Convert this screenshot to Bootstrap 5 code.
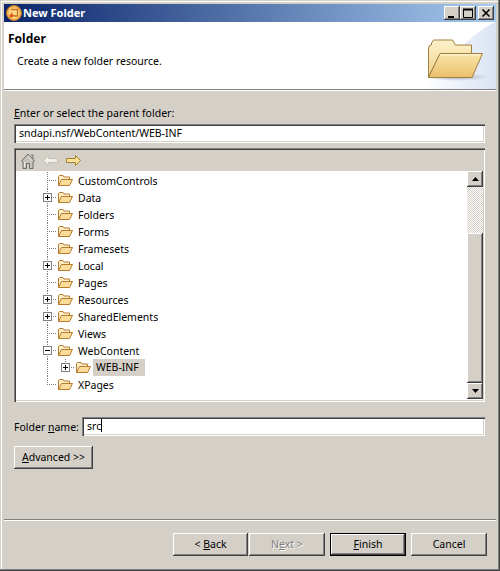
<!DOCTYPE html>
<html lang="en">
<head>
    <meta charset="UTF-8">
    <meta name="viewport" content="width=device-width, initial-scale=1.0">
    <title>New Folder</title>
    <link href="https://cdn.jsdelivr.net/npm/bootstrap@5.3.0/dist/css/bootstrap.min.css" rel="stylesheet">
    <style>
        body { margin: 0; background: #d4d0c8; font: 10.5px/14px "Noto Sans", sans-serif; color: #000; }
        .dlg-win { width: 500px; height: 571px; padding: 4px; background: #d4d0c8; box-shadow: inset -1px -1px 0 #404040, inset -2px -2px 0 #808080, inset 1px 1px 0 #d4d0c8, inset 2px 2px 0 #fff; }
        .dlg-title { height: 18px; padding: 0 2px; background: linear-gradient(90deg, #0a246a, #a6caf0); color: #fff; font-weight: 700; font-size: 11px; }
        .dlg-title svg.app-mark { margin-right: 1px; }
        .wbtn { width: 16px; height: 14px; background: #d4d0c8; box-shadow: inset -1px -1px 0 #404040, inset 1px 1px 0 #fff, inset -2px -2px 0 #808080; }
        .wbtn-gap { margin-right: 2px; }
        .dlg-head { height: 67px; background: #fff; overflow: hidden; }
        .head-text { padding: 9px 0 0 4px; }
        .head-title { font-size: 12px; font-weight: 700; line-height: 16px; }
        .head-desc { margin: 7px 0 0 9px; }
        .head-rule { height: 2px; background: #808080; border-bottom: 1px solid #fff; }
        .dlg-body { padding: 15px 11px 0 10px; }
        .w-field.form-control { height: 19px; min-height: 0; padding: 0 0 0 5px; border: 0; border-radius: 0; font: 10.5px/19px "Noto Sans", sans-serif; color: #000; background: #fff; box-shadow: inset 1px 1px 0 #808080, inset 2px 2px 0 #404040, inset -1px -1px 0 #fff, inset -2px -2px 0 #d4d0c8; }
        .parent-label { margin-bottom: 4px; }
        .tree-frame { height: 254px; margin-top: 5px; padding: 2px; box-shadow: inset 1px 1px 0 #808080, inset 2px 2px 0 #404040, inset -1px -1px 0 #fff, inset -2px -2px 0 #d4d0c8; }
        .tree-bar { height: 21px; padding-left: 5px; gap: 8px; }
        .tree-body { height: 229px; background: #fff; }
        .tree-list { padding: 1px 0 0 22px; }
        .t-row { height: 17px; }
        .twig { width: 18px; height: 17px; flex: none; background-repeat: no-repeat; }
        .twig-t { background-image: repeating-linear-gradient(180deg, #808080 0 1px, transparent 1px 2px), repeating-linear-gradient(90deg, #808080 0 1px, transparent 1px 2px); background-size: 1px 17px, 9px 1px; background-position: 9px 0, 9px 8px; }
        .twig-l { background-image: repeating-linear-gradient(180deg, #808080 0 1px, transparent 1px 2px), repeating-linear-gradient(90deg, #808080 0 1px, transparent 1px 2px); background-size: 1px 9px, 9px 1px; background-position: 9px 0, 9px 8px; }
        .twig-v { background-image: repeating-linear-gradient(180deg, #808080 0 1px, transparent 1px 2px); background-size: 1px 17px; background-position: 9px 0; }
        .tbox { width: 9px; height: 9px; margin: 4px 0 0 5px; background: #fff; border: 1px solid #808080; }
        .t-icon { margin: 0 5px 0 2px; flex: none; }
        .t-sel { background: #d4d0c8; padding: 0 6px 0 3px; margin-left: -3px; height: 17px; line-height: 17px; }
        .sbar { width: 16px; flex: none; }
        .sb-btn, .sb-thumb { background: #d4d0c8; box-shadow: inset -1px -1px 0 #404040, inset 1px 1px 0 #fff, inset -2px -2px 0 #808080; }
        .sb-btn { height: 16px; }
        .sb-track { height: 46px; background: repeating-conic-gradient(#fff 0 25%, #d4d0c8 0 50%) 0 0 / 2px 2px; }
        .sb-thumb { height: 150px; }
        .name-row { margin-top: 15px; }
        .name-label { width: 68px; flex: none; }
        .txt-caret { display: inline-block; width: 1px; height: 13px; background: #000; vertical-align: -2px; }
        .cl-btn.btn { width: 76px; height: 23px; padding: 0; border: 0; border-radius: 0; background: #d4d0c8; color: #000; font: 10.5px/23px "Noto Sans", sans-serif; box-shadow: inset -1px -1px 0 #404040, inset 1px 1px 0 #fff, inset -2px -2px 0 #808080; }
        .cl-btn.is-default { box-shadow: inset 0 0 0 1px #000, inset -2px -2px 0 #404040, inset 2px 2px 0 #fff, inset -3px -3px 0 #808080; }
        .cl-btn.is-off { color: #808080; text-shadow: 1px 1px 0 #fff; opacity: 1; }
        .cl-btn.back-btn { width: 75px; margin-right: 1px; }
        .cl-btn.after-gap { margin-left: 5px; }
        .adv-btn.btn { width: 79px; margin-top: 10px; display: block; }
        .foot-rule { height: 2px; margin-top: 50px; background: #808080; border-bottom: 1px solid #fff; }
        .dlg-foot { padding: 12px 9px 0 0; }
    </style>
</head>
<body>
    <div class="dlg-win d-flex flex-column">
        <div class="dlg-title d-flex align-items-center">
            <svg class="app-mark" width="16" height="16" viewBox="0 0 16 16"><circle cx="8" cy="8" r="7.500" fill="#f0b050" stroke="#c47a20"/><circle cx="8" cy="8" r="5.500" fill="#fbd88c"/><path d="M5 4.500h6.500v6.500h-4" fill="none" stroke="#c8701e" stroke-width="1.300"/><path d="M3 11l3-4 .5 2.500 2.500.5-4 3z" fill="#e0601a"/></svg>
            <span class="flex-grow-1">New Folder</span>
            <div class="wbtn d-flex"><svg width="16" height="14"><rect x="4" y="10" width="6" height="2"/></svg></div>
            <div class="wbtn wbtn-gap d-flex"><svg width="16" height="14"><path d="M3.500 3.500h9v8h-9z" fill="none" stroke="#000"/><path d="M3 3.500h10" stroke="#000" stroke-width="2"/></svg></div>
            <div class="wbtn d-flex"><svg width="16" height="14"><path d="M4.500 3.500l7 7m0-7l-7 7" stroke="#000" stroke-width="1.600"/></svg></div>
        </div>

        <div class="dlg-head d-flex justify-content-between">
            <div class="head-text">
                <div class="head-title">Folder</div>
                <div class="head-desc">Create a new folder resource.</div>
            </div>
            <svg width="75" height="67" viewBox="0 0 75 67">
                <defs>
                    <linearGradient id="skyFade" x1="0" x2="1" y1="0" y2="0"><stop offset="0" stop-color="#fff"/><stop offset="1" stop-color="#dbe4f4"/></linearGradient>
                    <linearGradient id="frontFold" x1="0" x2="0" y1="0" y2="1"><stop offset="0" stop-color="#f9e6a8"/><stop offset="1" stop-color="#eac06c"/></linearGradient>
                    <linearGradient id="backFold" x1="0" x2="0" y1="0" y2="1"><stop offset="0" stop-color="#fdf2cc"/><stop offset="1" stop-color="#efd18a"/></linearGradient>
                    <radialGradient id="dropShade"><stop offset="0" stop-color="#a8aec0"/><stop offset="1" stop-color="#a8aec0" stop-opacity="0"/></radialGradient>
                </defs>
                <path d="M0 67C20 50 45 12 75 0V67Z" fill="url(#skyFade)"/>
                <ellipse cx="36" cy="55" rx="32" ry="4" fill="url(#dropShade)"/>
                <path d="M7.500 55V26q0-3 3-3V21l2-3h19l3 5h16v9H19z" fill="url(#backFold)" stroke="#a08040"/>
                <path d="M7.500 55.500L19 31.500H61.500L51 55.500Z" fill="url(#frontFold)" stroke="#a08040"/>
                <path d="M20 33H59" stroke="#fff8e0"/>
            </svg>
        </div>
        <div class="head-rule"></div>

        <div class="dlg-body d-flex flex-column">
            <div class="parent-label"><u>E</u>nter or select the parent folder:</div>
            <div class="w-field form-control">sndapi.nsf/WebContent/WEB-INF</div>

            <div class="tree-frame d-flex flex-column">
                <div class="tree-bar d-flex align-items-center">
                    <svg width="14" height="16" viewBox="0 0 14 16"><path d="M7 1L.5 8l1.500 1V15.500h3.500v-5h3v5H12V9l1.500-1z" fill="#c4c2bc" stroke="#6c6c68"/><path d="M10 2h2v4" fill="none" stroke="#6c6c68"/><path d="M3.500 9v5M7 3.500l3.500 4" stroke="#efede8"/></svg>
                    <svg width="15" height="11" viewBox="0 0 15 11"><path d="M.5 5.500L5.500.5v3h9v4h-9v3z" fill="#f0eee8" stroke="#c4c2bc"/></svg>
                    <svg width="15" height="11" viewBox="0 0 15 11"><path d="M14.500 5.500L9.500.5v3h-9v4h9v3z" fill="#fbe29a" stroke="#a8802c"/></svg>
                </div>
                <div class="tree-body d-flex">
                    <div class="tree-list flex-grow-1" id="treeList"></div>
                    <div class="sbar d-flex flex-column">
                        <div class="sb-btn d-flex align-items-center justify-content-center"><svg width="7" height="4"><path d="M3.500 0L7 4H0z"/></svg></div>
                        <div class="sb-track"></div>
                        <div class="sb-thumb"></div>
                        <div class="sb-btn d-flex align-items-center justify-content-center"><svg width="7" height="4"><path d="M0 0h7L3.500 4z"/></svg></div>
                    </div>
                </div>
            </div>

            <div class="name-row d-flex align-items-center">
                <div class="name-label">Folder <u>n</u>ame:</div>
                <div class="w-field form-control">src<span class="txt-caret"></span></div>
            </div>
            <button type="button" class="btn cl-btn adv-btn"><u>A</u>dvanced &gt;&gt;</button>
        </div>

        <div class="foot-rule"></div>
        <div class="dlg-foot d-flex justify-content-end">
            <button type="button" class="btn cl-btn back-btn">&lt; <u>B</u>ack</button>
            <button type="button" class="btn cl-btn is-off" disabled>N<u>e</u>xt &gt;</button>
            <button type="button" class="btn cl-btn is-default after-gap"><u>F</u>inish</button>
            <button type="button" class="btn cl-btn after-gap">Cancel</button>
        </div>
    </div>

    <script>
        // rows of the tree, kind: p = plus, m = minus, empty = leaf
        const rows = [
            ['CustomControls', ''], ['Data', 'p'], ['Folders', ''], ['Forms', ''], ['Framesets', ''],
            ['Local', 'p'], ['Pages', ''], ['Resources', 'p'], ['SharedElements', 'p'], ['Views', ''],
            ['WebContent', 'm'], ['WEB-INF', 'p', 1], ['XPages', '', 0, 1]
        ];
        const folder = '<svg class="t-icon" width="15" height="11" viewBox="0 0 15 11"><path d="M.5 10.500V1.500l1-1h3.500l1 1.500h5.500v2" fill="#fdeec8" stroke="#b57a2c"/><path d="M.5 10.500l3-6h11l-3 6z" fill="#fcdc9a" stroke="#b57a2c"/></svg>';
        function box(kind) {
            if (!kind) return '';
            const bar = kind === 'p' ? '<path d="M3.500 1v5" stroke="#000"/>' : '';
            return '<div class="tbox d-flex"><svg width="7" height="7"><path d="M1 3.500h5" stroke="#000"/>' + bar + '</svg></div>';
        }
        document.getElementById('treeList').innerHTML = rows.map(([name, kind, nested, last]) => {
            const twigs = nested
                ? '<div class="twig twig-v"></div><div class="twig twig-l">' + box(kind) + '</div>'
                : '<div class="twig ' + (last ? 'twig-l' : 'twig-t') + '">' + box(kind) + '</div>';
            const label = nested ? '<span class="t-sel">' + name + '</span>' : '<span>' + name + '</span>';
            return '<div class="t-row d-flex align-items-center">' + twigs + folder + label + '</div>';
        }).join('');
    </script>
</body>
</html>
